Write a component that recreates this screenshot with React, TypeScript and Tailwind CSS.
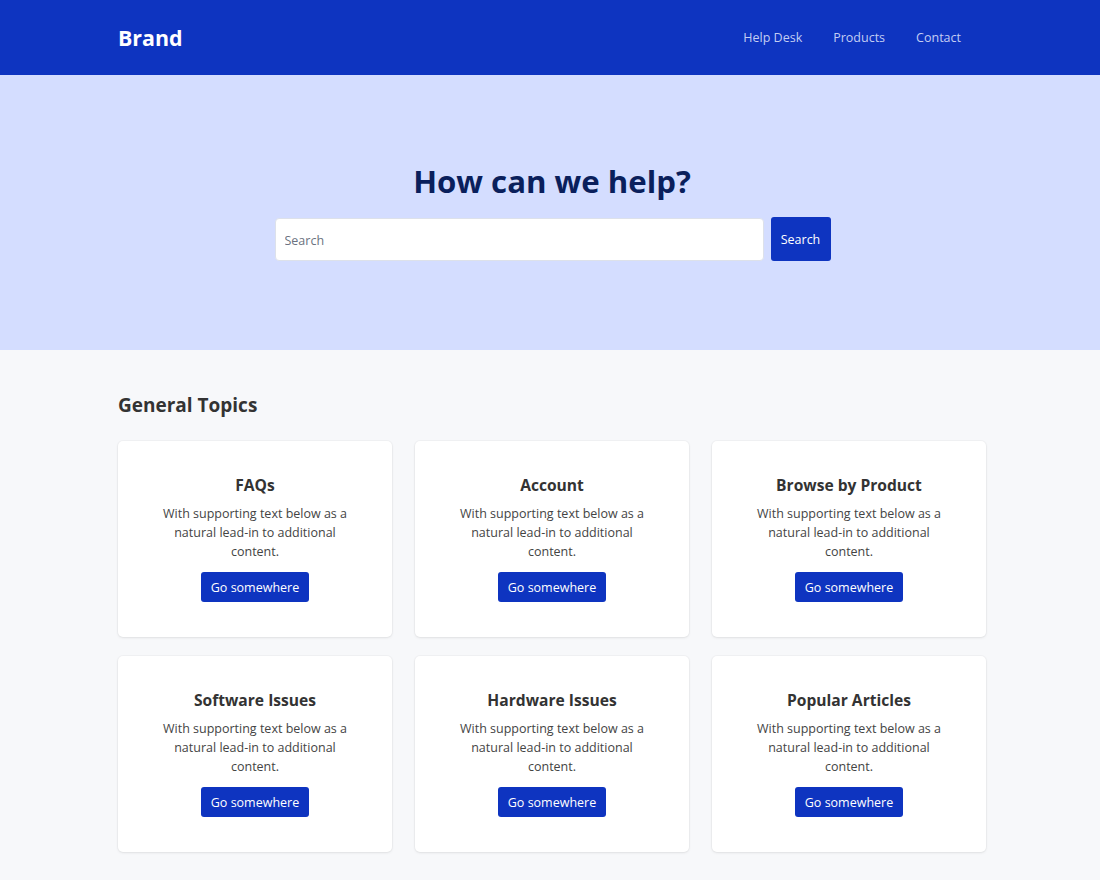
import React from 'react';

const topics = [
  'FAQs',
  'Account',
  'Browse by Product',
  'Software Issues',
  'Hardware Issues',
  'Popular Articles',
];

function TopicCard({ title }: { title: string }) {
  return (
    <div className="flex h-[196px] flex-col items-center rounded-[5px] bg-white px-10 pt-8 text-center shadow-[0_1px_3px_rgba(0,0,0,0.08),0_0_0_1px_rgba(0,0,0,0.025)]">
      <h3 className="text-[15.6px] leading-6 font-bold text-[#333]">{title}</h3>
      <p className="mt-[7px] text-[12.5px] leading-[19px] text-[#444]">
        With supporting text below as a natural lead-in to additional content.
      </p>
      <button className="mt-[11px] h-[30px] rounded-[3px] bg-[#0e34c0] px-[10px] pt-[2px] text-[12.5px] text-white">
        Go somewhere
      </button>
    </div>
  );
}

export default function App() {
  return (
    <div className="min-h-[880px] bg-[#f7f8fa] font-['Open_Sans',sans-serif]">
      {/* Navbar */}
      <header className="bg-[#0e34c0]">
        <div className="ml-[118px] flex h-[75px] w-[868px] items-center justify-between pt-[2px]">
          <span className="text-[21.4px] font-bold text-white">Brand</span>
          <nav className="mr-[25px] flex gap-[31px] text-[12.5px] text-[#c3cdf3]">
            <a href="#">Help Desk</a>
            <a href="#">Products</a>
            <a href="#">Contact</a>
          </nav>
        </div>
      </header>

      {/* Hero */}
      <section className="flex h-[275px] flex-col items-center bg-[#d4ddff] pt-[86px]">
        <h1 className="ml-1 text-[31.2px] leading-10 font-bold text-[#0a1f5c]">How can we help?</h1>
        <div className="mt-[16px] flex items-center gap-[7px] pl-[5px]">
          <input
            placeholder="Search"
            className="h-[43px] w-[489px] rounded-[4px] border border-[#dde1ea] bg-white px-[9px] pt-[2px] text-[12.5px] outline-none placeholder:text-[#6b7280]"
          />
          <button className="h-[44px] w-[60px] rounded-[3px] bg-[#0e34c0] pt-[2px] text-[12.5px] text-white">
            Search
          </button>
        </div>
      </section>

      {/* Topics */}
      <main className="ml-[118px] w-[868px] pt-[41px] pb-8">
        <h2 className="text-[19px] leading-7 font-bold text-[#333]">General Topics</h2>
        <div className="mt-[22px] grid grid-cols-3 gap-x-[23px] gap-y-[19px]">
          {topics.map((t) => (
            <TopicCard key={t} title={t} />
          ))}
        </div>
      </main>
    </div>
  );
}
